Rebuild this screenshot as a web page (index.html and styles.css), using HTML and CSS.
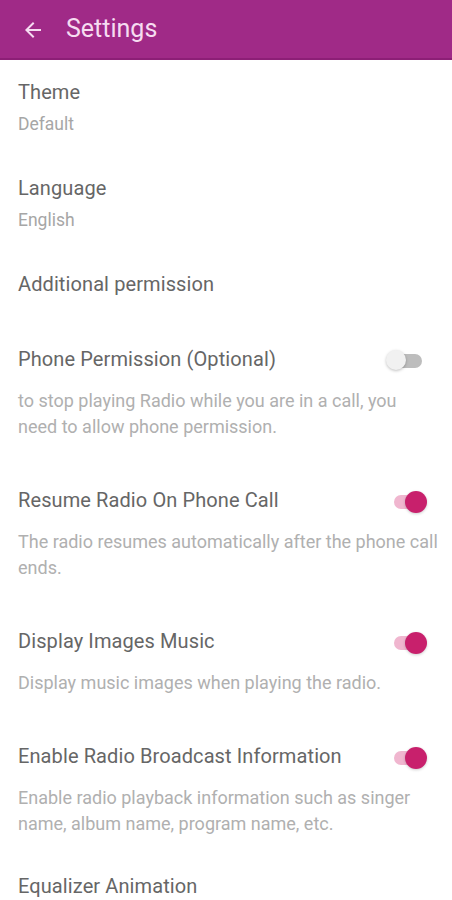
FILE: index.html
```html
<!DOCTYPE html>
<html lang="en">
<head>
  <meta charset="UTF-8">
  <meta name="viewport" content="width=device-width, initial-scale=1.0">
  <title>Settings</title>
  <link rel="stylesheet" href="styles.css">
</head>
<body>
  <header class="toolbar">
    <button class="back" aria-label="Back">
      <svg width="24" height="24" viewBox="0 0 24 24"><path d="M20 11H7.83l5.59-5.59L12 4l-8 8 8 8 1.41-1.41L7.83 13H20v-2z" fill="currentColor"/></svg>
    </button>
    <h1 class="toolbar-title">Settings</h1>
  </header>

  <main class="prefs">
    <div class="pref">
      <div class="pref-title">Theme</div>
      <div class="pref-summary">Default</div>
    </div>
    <div class="pref">
      <div class="pref-title">Language</div>
      <div class="pref-summary">English</div>
    </div>
    <div class="pref pref-category">
      <div class="pref-title">Additional permission</div>
    </div>

    <div class="pref pref-switch">
      <div class="pref-row">
        <div class="pref-title">Phone Permission (Optional)</div>
        <span class="switch"></span>
      </div>
      <div class="pref-desc">to stop playing Radio while you are in a call, you need to allow phone permission.</div>
    </div>
    <div class="pref pref-switch">
      <div class="pref-row">
        <div class="pref-title">Resume Radio On Phone Call</div>
        <span class="switch on"></span>
      </div>
      <div class="pref-desc">The radio resumes automatically after the phone call ends.</div>
    </div>
    <div class="pref pref-switch">
      <div class="pref-row">
        <div class="pref-title">Display Images Music</div>
        <span class="switch on"></span>
      </div>
      <div class="pref-desc">Display music images when playing the radio.</div>
    </div>
    <div class="pref pref-switch">
      <div class="pref-row">
        <div class="pref-title">Enable Radio Broadcast Information</div>
        <span class="switch on"></span>
      </div>
      <div class="pref-desc">Enable radio playback information such as singer name, album name, program name, etc.</div>
    </div>
    <div class="pref pref-last">
      <div class="pref-title">Equalizer Animation</div>
    </div>
  </main>
</body>
</html>
```

FILE: styles.css
```css
body {
  margin: 0;
  font-family: Roboto, 'Noto Sans', sans-serif;
  background-color: #ffffff;
  overflow: hidden;
}
.toolbar {
  height: 58px;
  background-color: #a02a87;
  border-bottom: 2px solid #8c1f76;
  display: flex;
  align-items: center;
  padding-left: 21px;
  color: #f6dcf1;
}
.back {
  background: none;
  border: none;
  padding: 0;
  color: #f6dcf1;
  display: flex;
  margin-right: 21px;
  margin-top: 2px;
}
.toolbar-title {
  margin: 0;
  font-size: 25px;
  font-weight: 400;
  line-height: 28px;
}
.pref {
  padding: 20px 18px 21px;
}
.pref-title {
  font-size: 20px;
  line-height: 24px;
  letter-spacing: 0.1px;
  color: #666666;
}
.pref-summary {
  margin-top: 9px;
  font-size: 17.5px;
  line-height: 22px;
  color: #a6a6a6;
}
.pref-category {
  padding-bottom: 27px;
}
.pref-switch {
  padding: 24px 18px;
}
.pref-row {
  display: flex;
  align-items: center;
  justify-content: space-between;
}
.pref-desc {
  margin-top: 17px;
  margin-right: -5px;
  font-size: 18px;
  line-height: 26px;
  color: #b0b0b0;
}
.pref-last {
  padding-top: 13px;
}
.switch {
  position: relative;
  width: 26px;
  height: 14px;
  border-radius: 7px;
  background-color: #bdbdbd;
  margin-right: 12px;
  margin-top: 4px;
  flex-shrink: 0;
}
.switch::after {
  content: "";
  position: absolute;
  left: -10px;
  top: -4px;
  width: 20px;
  height: 20px;
  border-radius: 50%;
  background-color: #f1f1f1;
  box-shadow: 0 1px 3px rgba(0, 0, 0, 0.25);
}
.switch.on {
  background-color: #f0b6cf;
  margin-right: 14px;
}
.switch.on::after {
  left: auto;
  right: -7px;
  top: -4px;
  width: 22px;
  height: 22px;
  background-color: #c8206c;
  box-shadow: 0 1px 3px rgba(0, 0, 0, 0.2);
}
```
